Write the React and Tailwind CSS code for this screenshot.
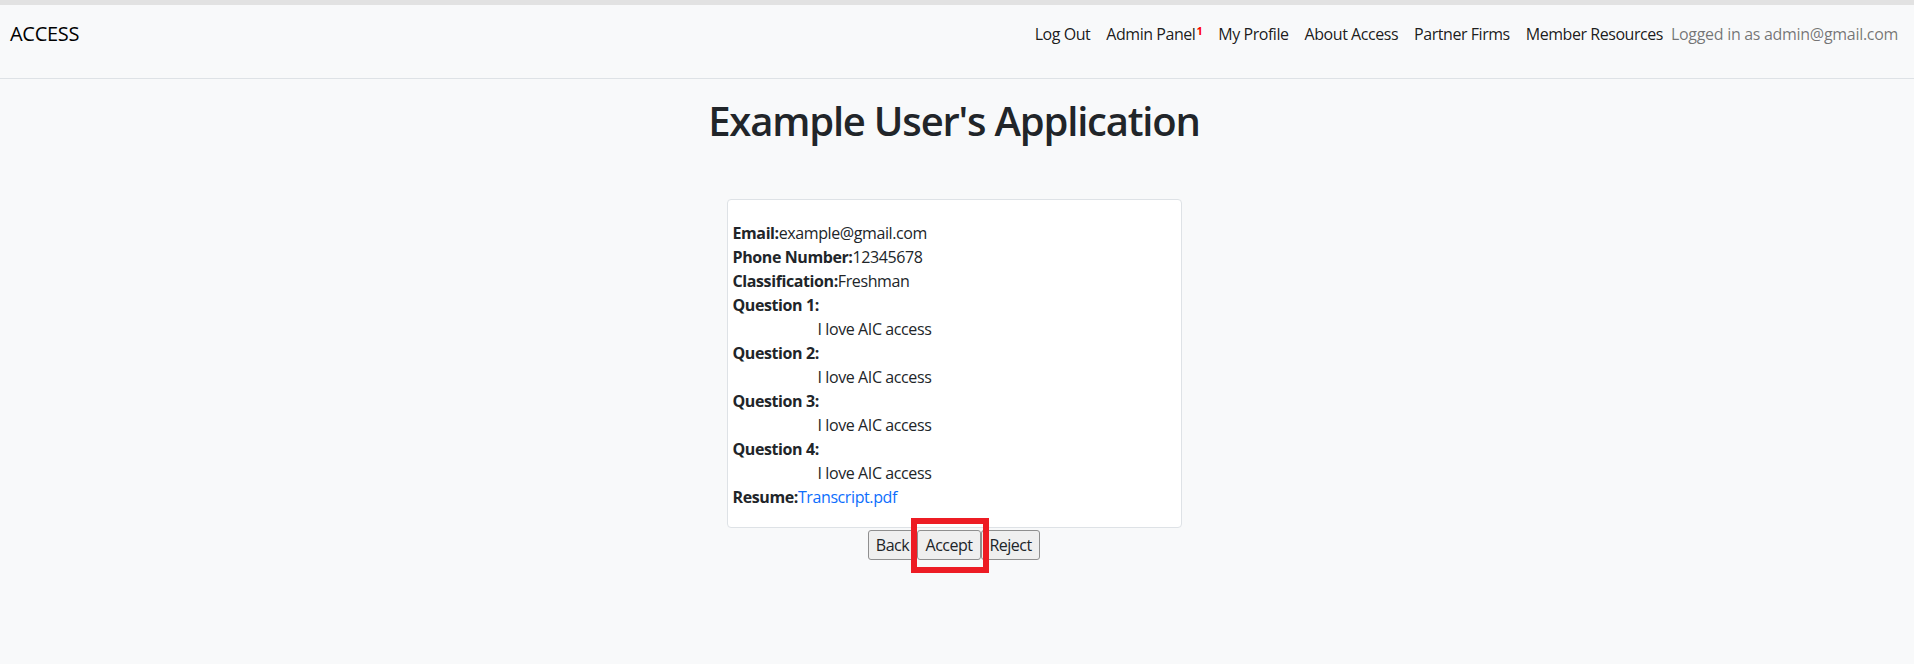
import React from "react";

const links = ["Log Out", "Admin Panel", "My Profile", "About Access", "Partner Firms", "Member Resources"];

const answers = [
  { label: "Question 1:", value: "I love AIC access" },
  { label: "Question 2:", value: "I love AIC access" },
  { label: "Question 3:", value: "I love AIC access" },
  { label: "Question 4:", value: "I love AIC access" },
];

export default function App() {
  return (
    <div className="min-h-[664px] bg-[#f8f9fa] text-[#212529] font-['Segoe_UI','Open_Sans',sans-serif]">
      <div className="h-[5px] bg-[#e2e2e2]" />

      {/* Navbar */}
      <nav className="h-[74px] border-b border-[#dee2e6] flex items-start justify-between pt-[17px] pl-[10px] pr-[16px]">
        <a className="text-[20px] leading-[30px] text-black -mt-[3px] tracking-[-0.3px]">ACCESS</a>
        <div className="flex items-center text-[16px] leading-[24px]">
          {links.map((l) => (
            <a key={l} className="px-[8px] text-black/90 tracking-[-0.45px]">
              {l}
              {l === "Admin Panel" && (
                <sup className="text-[11px] font-bold text-[#ff0000] ml-[1px]">1</sup>
              )}
            </a>
          ))}
          <span className="text-black/55 tracking-[-0.3px]">Logged in as admin@gmail.com</span>
        </div>
      </nav>

      <main className="flex flex-col items-center pr-[6px]">
        <h1 className="text-[40px] leading-[48px] font-semibold tracking-[-1.2px] mt-[18px]">Example User's Application</h1>

        {/* Application card */}
        <div className="mt-[54px] w-[455px] bg-white border border-[#dee2e6] rounded-[4px] pl-[5px] pt-[21px] pb-[18px] text-[16px] leading-[24px] tracking-[-0.4px]">
          <p><b>Email:</b>example@gmail.com</p>
          <p><b>Phone Number:</b>12345678</p>
          <p><b>Classification:</b>Freshman</p>
          {answers.map((a) => (
            <div key={a.label}>
              <p><b>{a.label}</b></p>
              <p className="pl-[85px]">{a.value}</p>
            </div>
          ))}
          <p>
            <b>Resume:</b>
            <a className="text-[#0d6efd]">Transcript.pdf</a>
          </p>
        </div>

        {/* Actions */}
        <div className="flex mt-[2px] text-[16px] leading-[24px] tracking-[-0.5px]">
          <button className="w-[49px] h-[30px] bg-[#efefef] border border-[#8f8f8f] rounded-[3px]">Back</button>
          <div className="relative">
            <button className="w-[64px] h-[30px] bg-[#efefef] border border-[#8f8f8f] rounded-[3px]">Accept</button>
            <div className="absolute -left-[6px] -right-[8px] -top-[12px] -bottom-[13px] border-[6px] border-[#ed1c24]" />
          </div>
          <button className="w-[59px] h-[30px] bg-[#efefef] border border-[#8f8f8f] rounded-[3px]">Reject</button>
        </div>
      </main>
    </div>
  );
}
